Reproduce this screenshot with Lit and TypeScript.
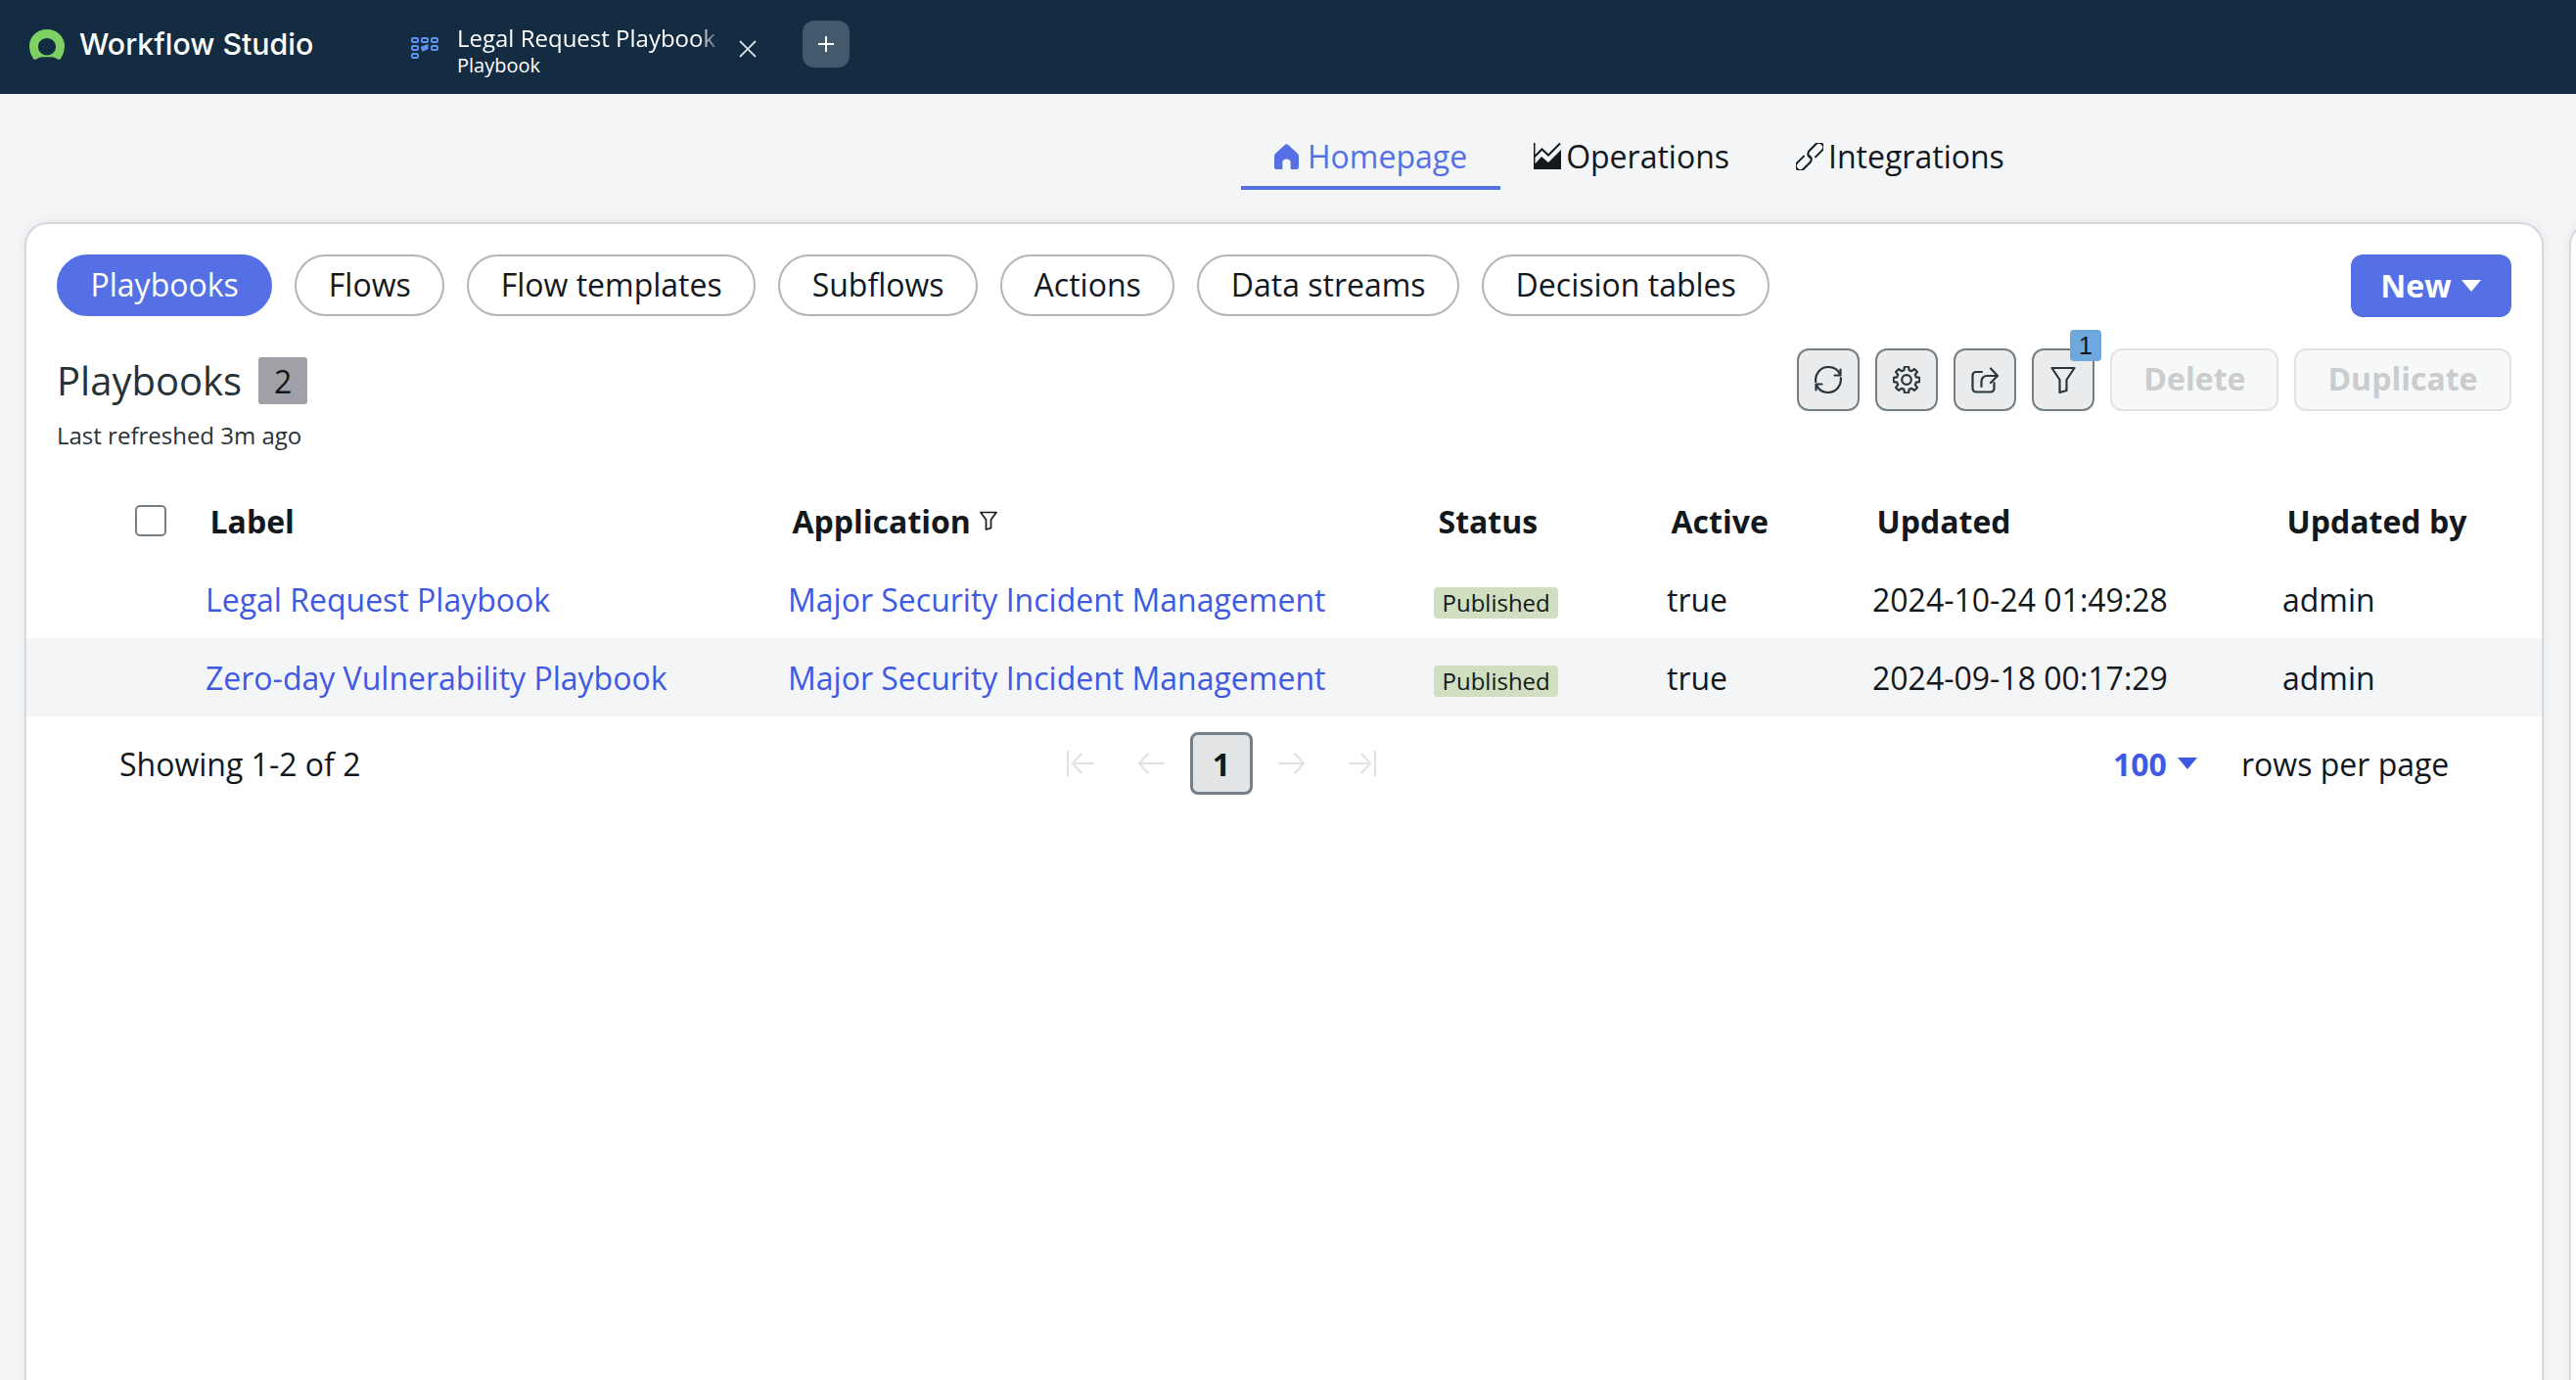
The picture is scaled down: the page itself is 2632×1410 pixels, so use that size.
import { LitElement, html, css, svg } from "lit";
import { customElement, state } from "lit/decorators.js";

const pills = ["Playbooks", "Flows", "Flow templates", "Subflows", "Actions", "Data streams", "Decision tables"];

const rows = [
  { label: "Legal Request Playbook", app: "Major Security Incident Management", status: "Published", active: "true", updated: "2024-10-24 01:49:28", by: "admin" },
  { label: "Zero-day Vulnerability Playbook", app: "Major Security Incident Management", status: "Published", active: "true", updated: "2024-09-18 00:17:29", by: "admin" },
];

// gear outline with rounded-ish teeth
function gearPath(cx: number, cy: number, outer: number, inner: number, teeth: number) {
  const pts: string[] = [];
  const step = (Math.PI * 2) / teeth;
  for (let i = 0; i < teeth; i++) {
    const a = -Math.PI / 2 + i * step;
    const w = step * 0.2;
    const list: [number, number][] = [
      [inner, a - step * 0.32],
      [outer, a - w],
      [outer, a + w],
      [inner, a + step * 0.32],
    ];
    for (const [r, t] of list) {
      pts.push(`${(cx + r * Math.cos(t)).toFixed(2)} ${(cy + r * Math.sin(t)).toFixed(2)}`);
    }
  }
  return "M" + pts.join("L") + "Z";
}

const icons = {
  logo: svg`<svg width="36" height="31" viewBox="0 0 36 31"><path fill="#7ed263" fill-rule="evenodd" d="M18 0C8 0 0 7.500 0 16.500C0 21.500 1.500 26.500 4.500 30.500C5 31 6 31 7 30.500C9.500 29.200 11.500 28.300 13.500 28.300H22.500C24.500 28.300 26.500 29.200 29 30.500C30 31 31 31 31.500 30.500C34.500 26.500 36 21.500 36 16.500C36 7.500 28 0 18 0ZM18 9C23 9 27 12.800 27 17.700C27 22.500 23 26.500 18 26.500C13 26.500 9 22.500 9 17.700C9 12.800 13 9 18 9Z"/></svg>`,
  tab: svg`<svg width="28" height="22" viewBox="0 0 28 22" fill="none" stroke="#5f93f0" stroke-width="2"><rect x="1" y="1" width="6" height="4" rx="1.200"/><rect x="11" y="1" width="6" height="4" rx="1.200"/><rect x="21" y="1" width="6" height="4" rx="1.200"/><rect x="1" y="9" width="6" height="4" rx="1.200"/><rect x="21" y="9" width="6" height="4" rx="1.200"/><rect x="1" y="17" width="6" height="4" rx="1.200"/><path d="M11 10.500L16.500 8.500V11.500L12 13.500Z" fill="#5f93f0"/></svg>`,
  close: svg`<svg width="18" height="18" viewBox="0 0 18 18" stroke="#d7dde1" stroke-width="1.800"><path d="M1 1L17 17M17 1L1 17"/></svg>`,
  plus: svg`<svg width="18" height="18" viewBox="0 0 18 18" stroke="#fff" stroke-width="2"><path d="M9 1V17M1 9H17"/></svg>`,
  home: svg`<svg width="25" height="26" viewBox="0 0 24 25" fill="currentColor"><path d="M10.600 .700Q12 -.300 13.400 .700L22.800 9.300Q24 10.400 24 12V23Q24 25 22 25H17Q16 25 16 24V18.500Q16 15 12 15Q8 15 8 18.500V24Q8 25 7 25H2Q0 25 0 23V12Q0 10.400 1.200 9.300Z"/></svg>`,
  chart: svg`<svg width="28" height="27" viewBox="0 0 28 27"><path fill="#12181c" d="M0 0H1.500V27H0ZM0 27V23L8 14L15 20L28 7V27Z"/><path fill="none" stroke="#12181c" stroke-width="2" d="M1 14L8.500 6.500L15 12.500L27 .5"/></svg>`,
  link: svg`<svg width="28" height="28" viewBox="0 0 28 28" fill="none" stroke="#12181c" stroke-width="2" stroke-linecap="round"><g transform="rotate(-45 14 14)"><path d="M10 9.500H.5a4.500 4.500 0 0 0 0 9H10a4.500 4.500 0 0 0 4-6.500"/><path d="M18 18.500H27.500a4.500 4.500 0 0 0 0-9H18a4.500 4.500 0 0 0-4 6.500"/></g></svg>`,
  refresh: svg`<svg width="28" height="28" viewBox="0 0 28 28" fill="none" stroke="#2a363d" stroke-width="2.200" stroke-linecap="round" stroke-linejoin="round"><path d="M1.200 16C.2 8 6 1 14 1C19.500 1 24 4 26 8.500"/><path d="M26.500 3.500V9.500H20.500"/><path d="M26.800 12C27.800 20 22 27 14 27C8.500 27 4 24 2 19.500"/><path d="M1.500 24.500V18.500H7.500"/></svg>`,
  gear: svg`<svg width="28" height="28" viewBox="0 0 28 28" fill="none" stroke="#2a363d" stroke-width="2.200" stroke-linejoin="round"><path d=${gearPath(14, 14, 13.5, 10.2, 8)}/><circle cx="14" cy="14" r="4.800"/></svg>`,
  share: svg`<svg width="28" height="28" viewBox="0 0 28 28" fill="none" stroke="#2a363d" stroke-width="2.200" stroke-linecap="round" stroke-linejoin="round"><path d="M11 6H5A3.500 3.500 0 0 0 1.500 9.500V23A3.500 3.500 0 0 0 5 26.500H20A3.500 3.500 0 0 0 23.500 23V17"/><path d="M10.500 21V15.500A5.500 5.500 0 0 1 16 10H26.500"/><path d="M20 2.500L27 10L20 17"/></svg>`,
  funnel: svg`<svg width="26" height="28" viewBox="0 0 26 28" fill="none" stroke="#2a363d" stroke-width="2.200" stroke-linejoin="round"><path d="M1.500 2H24.500L16.500 14V25L9.500 27V14Z"/></svg>`,
  funnelSm: svg`<svg width="18" height="20" viewBox="0 0 18 20" fill="none" stroke="#12181c" stroke-width="1.700" stroke-linejoin="round"><path d="M1 1.500H17L11.500 9V17.500L6.500 19V9Z"/></svg>`,
  first: svg`<svg width="28" height="26" viewBox="0 0 28 26" fill="none" stroke="#dfe1e2" stroke-width="2"><path d="M1 0V26M28 13H7M15 3L6 13L15 23"/></svg>`,
  prev: svg`<svg width="28" height="26" viewBox="0 0 28 26" fill="none" stroke="#dfe1e2" stroke-width="2"><path d="M28 13H2M11 3L2 13L11 23"/></svg>`,
  next: svg`<svg width="28" height="26" viewBox="0 0 28 26" fill="none" stroke="#dfe1e2" stroke-width="2"><path d="M0 13H26M17 3L26 13L17 23"/></svg>`,
  last: svg`<svg width="28" height="26" viewBox="0 0 28 26" fill="none" stroke="#dfe1e2" stroke-width="2"><path d="M27 0V26M0 13H21M13 3L22 13L13 23"/></svg>`,
};

@customElement("app-root")
export class AppRoot extends LitElement {
  @state() activePill = "Playbooks";

  static styles = css`
    :host {
      display: block;
      height: 100vh;
      overflow: hidden;
      background: #f4f5f7;
      color: #12181c;
      font-family: "Open Sans", "Noto Sans", sans-serif;
    }
    * { box-sizing: border-box; }
    svg { display: block; flex: none; }

    .topbar {
      height: 96px;
      background: #132c42;
      display: flex;
      align-items: center;
      color: #fff;
    }
    .brand {
      display: flex;
      align-items: center;
      gap: 15px;
      width: 420px;
      padding-left: 30px;
      margin-top: -6px;
      font-family: Inter, sans-serif;
      font-weight: 500;
      font-size: 30.300px;
    }
    .doc-tab {
      display: flex;
      align-items: center;
      width: 400px;
      margin-top: 2px;
    }
    .doc-tab .titles { margin: 4px 0 0 19px; width: 268px; }
    .doc-tab .t1 {
      font-size: 24px;
      line-height: 32px;
      white-space: nowrap;
      -webkit-mask-image: linear-gradient(to right, #000 92%, rgba(0,0,0,.35) 98%);
      mask-image: linear-gradient(to right, #000 92%, rgba(0,0,0,.35) 98%);
    }
    .doc-tab .t2 { font-size: 20px; line-height: 24px; }
    .doc-tab .x { margin-left: 20px; margin-top: 2px; }
    .add {
      width: 48px;
      height: 48px;
      margin-top: -6px;
      border-radius: 12px;
      background: #425a6b;
      display: flex;
      align-items: center;
      justify-content: center;
    }

    .nav {
      height: 131px;
      padding: 0 0 33px 1268px;
      display: flex;
      align-items: flex-end;
    }
    .nav-item {
      display: flex;
      align-items: center;
      gap: 9px;
      height: 65px;
      padding: 0 34px 0;
      font-size: 32px;
      border-bottom: 4px solid transparent;
    }
    .nav-item.on { color: #5570e5; border-bottom-color: #5570e5; }
    .nav-item.tight { gap: 5px; }

    .boards {
      display: flex;
      gap: 26px;
      padding-left: 24.500px;
      height: 1183px;
    }
    .card {
      flex: none;
      width: 2574.500px;
      height: 1300px;
      background: #fff;
      border: 2.500px solid #d7dadc;
      border-radius: 24px;
      box-shadow: 0 0 10px rgba(60, 70, 80, .1);
    }

    .pills-row {
      display: flex;
      justify-content: space-between;
      padding: 31px 31.500px 0;
    }
    .pills { display: flex; gap: 23px; }
    .pill {
      height: 63px;
      border: 2.500px solid #b0b6ba;
      border-radius: 32px;
      padding: 0 32.500px 2px;
      background: #fff;
      color: #12181c;
      font: inherit;
      font-size: 32px;
    }
    .pill.on { background: #5570e5; border-color: #5570e5; color: #fff; }
    .new {
      display: flex;
      align-items: center;
      justify-content: center;
      gap: 10px;
      width: 164px;
      height: 64px;
      padding-bottom: 2px;
      border: 0;
      border-radius: 12px;
      background: #5570e5;
      color: #fff;
      font: inherit;
      font-weight: 700;
      font-size: 32px;
    }
    .caret {
      width: 0;
      height: 0;
      border-left: 10px solid transparent;
      border-right: 10px solid transparent;
      border-top: 12px solid currentColor;
    }

    .head {
      display: flex;
      justify-content: space-between;
      padding: 32px 31.500px 0;
      height: 168px;
    }
    .title { display: flex; align-items: center; gap: 17px; margin-top: 9px; }
    h1 { margin: 0; font-weight: 400; font-size: 40px; line-height: 48px; color: #263238; }
    .count {
      width: 50px;
      height: 48px;
      background: #a0a0a6;
      border-radius: 3px;
      display: flex;
      align-items: center;
      justify-content: center;
      font-size: 32px;
    }
    .sub { margin-top: 15px; font-size: 24px; line-height: 34px; color: #263238; }
    .tools { display: flex; gap: 16px; }
    .icon-btn {
      position: relative;
      width: 64px;
      height: 64px;
      border: 2.500px solid #767f85;
      border-radius: 12px;
      background: #e9ebec;
      display: flex;
      align-items: center;
      justify-content: center;
      padding: 0;
    }
    .flag {
      position: absolute;
      top: -21.500px;
      right: -8.500px;
      width: 32px;
      height: 32px;
      border-radius: 4px;
      background: #6fa8dc;
      color: #12181c;
      font-size: 25px;
      line-height: 32px;
      text-align: center;
    }
    .ghost {
      height: 64px;
      padding: 0 32px 4px;
      border: 2.500px solid #e0e2e3;
      border-radius: 12px;
      background: #f7f8f8;
      color: #cbcccd;
      font: inherit;
      font-weight: 700;
      font-size: 32px;
    }

    .grid {
      display: grid;
      grid-template-columns: 183.500px 595px 660px 238px 210px 419px 1fr;
      align-items: center;
      height: 80px;
      font-size: 32px;
    }
    .grid.th { font-weight: 700; }
    .grid.th > div:not(.check) { padding-left: 4.500px; }
    .grid.alt { background: #f4f5f7; }
    .check { padding-left: 111.500px; }
    .box {
      width: 32px;
      height: 32px;
      border: 2.500px solid #767f85;
      border-radius: 5px;
      background: #fff;
    }
    .app-th { display: flex; align-items: center; gap: 9px; }
    a { color: #4059e2; text-decoration: none; }
    .tag {
      display: inline-block;
      padding: 0 8.500px;
      height: 32px;
      line-height: 32px;
      border-radius: 4px;
      background: #d0dfbf;
      font-size: 24px;
    }

    .foot {
      display: flex;
      align-items: center;
      height: 96px;
      padding-left: 95.500px;
      font-size: 32px;
    }
    .showing { width: 968px; }
    .pager { display: flex; align-items: center; width: 316px; }
    .pager .page {
      width: 64px;
      height: 64px;
      margin: 0 26px;
      border: 3.500px solid #767f85;
      border-radius: 8px;
      background: #e2e4e6;
      display: flex;
      align-items: center;
      justify-content: center;
      font-weight: 700;
    }
    .pager .wide { margin-right: 44px; }
    .size {
      display: flex;
      align-items: center;
      gap: 11px;
      margin-left: 753px;
      width: 131px;
      color: #4059e2;
      font-weight: 700;
    }
  `;

  render() {
    return html`
      <div class="topbar">
        <div class="brand">${icons.logo}<span>Workflow Studio</span></div>
        <div class="doc-tab">
          ${icons.tab}
          <div class="titles">
            <div class="t1">Legal Request Playbook</div>
            <div class="t2">Playbook</div>
          </div>
          <span class="x">${icons.close}</span>
        </div>
        <div class="add">${icons.plus}</div>
      </div>

      <div class="nav">
        <div class="nav-item on">${icons.home}<span>Homepage</span></div>
        <div class="nav-item tight">${icons.chart}<span>Operations</span></div>
        <div class="nav-item tight">${icons.link}<span>Integrations</span></div>
      </div>

      <div class="boards">
        <div class="card">
          <div class="pills-row">
            <div class="pills">
              ${pills.map((p) => html`<button class="pill ${p === this.activePill ? "on" : ""}" @click=${() => (this.activePill = p)}>${p}</button>`)}
            </div>
            <button class="new">New <span class="caret"></span></button>
          </div>

          <div class="head">
            <div>
              <div class="title"><h1>Playbooks</h1><span class="count">2</span></div>
              <div class="sub">Last refreshed 3m ago</div>
            </div>
            <div class="tools">
              <button class="icon-btn">${icons.refresh}</button>
              <button class="icon-btn">${icons.gear}</button>
              <button class="icon-btn">${icons.share}</button>
              <button class="icon-btn">${icons.funnel}<span class="flag">1</span></button>
              <button class="ghost">Delete</button>
              <button class="ghost">Duplicate</button>
            </div>
          </div>

          <div class="grid th">
            <div class="check"><div class="box"></div></div>
            <div>Label</div>
            <div class="app-th">Application ${icons.funnelSm}</div>
            <div>Status</div>
            <div>Active</div>
            <div>Updated</div>
            <div>Updated by</div>
          </div>
          ${rows.map(
            (r, i) => html`
              <div class="grid ${i % 2 ? "alt" : ""}">
                <div></div>
                <div><a href="#">${r.label}</a></div>
                <div><a href="#">${r.app}</a></div>
                <div><span class="tag">${r.status}</span></div>
                <div>${r.active}</div>
                <div>${r.updated}</div>
                <div>${r.by}</div>
              </div>
            `
          )}

          <div class="foot">
            <div class="showing">Showing 1-2 of 2</div>
            <div class="pager">
              <span class="wide">${icons.first}</span>
              <span>${icons.prev}</span>
              <span class="page">1</span>
              <span class="wide">${icons.next}</span>
              <span>${icons.last}</span>
            </div>
            <div class="size">100 <span class="caret"></span></div>
            <div>rows per page</div>
          </div>
        </div>
        <div class="card"></div>
      </div>
    `;
  }
}
